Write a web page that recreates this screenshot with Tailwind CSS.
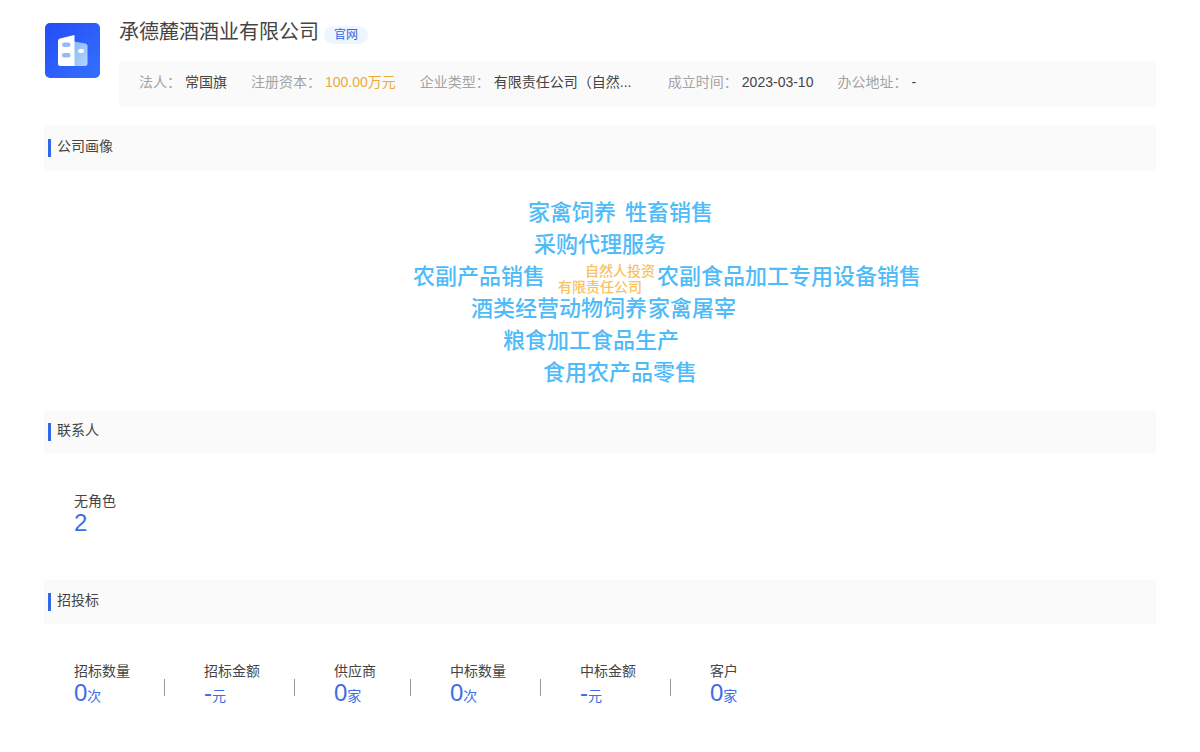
<!DOCTYPE html>
<html lang="zh-CN">
<head>
<meta charset="utf-8">
<meta name="viewport" content="width=device-width, initial-scale=1">
<title>承德麓酒酒业有限公司</title>
<script src="https://cdn.jsdelivr.net/npm/@tailwindcss/browser@4"></script>
</head>
<body class="bg-white px-11 font-['Liberation_Sans','Noto_Sans_CJK_SC',sans-serif] text-sm text-[#444]">
<header class="flex gap-[19px] pt-4">
  <svg class="mt-[7px] ml-px size-[55px] shrink-0" viewBox="0 0 55 55" aria-hidden="true">
    <defs>
      <linearGradient id="tile" x1="0" y1="0" x2="1" y2="1"><stop offset="0" stop-color="#234df8"/><stop offset="1" stop-color="#3570fd"/></linearGradient>
      <linearGradient id="wing" x1="0" y1="0" x2="1" y2="1"><stop offset="0" stop-color="#8bb8fb"/><stop offset="1" stop-color="#b2d5fe"/></linearGradient>
    </defs>
    <rect width="55" height="55" rx="5" fill="url(#tile)"/>
    <path d="M29 18.500 40.500 20.500Q42.500 21 42.500 23V40.500Q42.500 43 40 43H29Z" fill="url(#wing)"/>
    <path d="M15 15.500 29.500 12V43H15.500Q13 43 13 40.500V18Q13 16 15 15.500Z" fill="#fff"/>
    <rect x="17" y="19.500" width="8.500" height="4.500" rx="2.200" fill="#94b9f8"/>
    <rect x="17" y="30" width="8.500" height="4.500" rx="2.200" fill="#94b9f8"/>
    <rect x="33" y="26" width="6" height="4" rx="2" fill="#fff"/>
  </svg>
  <div class="min-w-0 flex-1">
    <div class="flex items-start gap-[5px]">
      <h1 class="text-xl leading-8">承德麓酒酒业有限公司</h1>
      <a href="#" class="mt-[10px] rounded-full bg-[#edf5fe] px-[10px] text-xs leading-[18px] text-[#2f66e8]">官网</a>
    </div>
    <dl class="mt-[14px] flex flex-wrap gap-x-6 bg-[#fafafa] px-5 pt-[10px] pb-[14px] leading-5">
      <div class="flex gap-1"><dt class="text-[#a3a3a3]">法人：</dt><dd>常国旗</dd></div>
      <div class="flex gap-1"><dt class="text-[#a3a3a3]">注册资本：</dt><dd class="text-[#eea93a]">100.00万元</dd></div>
      <div class="flex gap-1"><dt class="text-[#a3a3a3]">企业类型：</dt><dd class="w-[150px]">有限责任公司（自然...</dd></div>
      <div class="flex gap-1"><dt class="text-[#a3a3a3]">成立时间：</dt><dd>2023-03-10</dd></div>
      <div class="flex gap-1"><dt class="text-[#a3a3a3]">办公地址：</dt><dd>-</dd></div>
    </dl>
  </div>
</header>
<main>
  <section class="mt-5">
    <div class="flex h-11 items-start gap-[6px] bg-[#fafafa] pl-1">
      <span class="mt-[13px] h-[18px] w-[3px] bg-[#3069e8]"></span>
      <h2 class="pt-[10px] leading-5">公司画像</h2>
    </div>
    <div class="relative mx-auto h-60 w-[600px] text-[22px] leading-8 font-medium whitespace-nowrap text-[#4fbbf8]">
      <span class="absolute top-[27px] left-[228px]">家禽饲养</span>
      <span class="absolute top-[27px] left-[325px]">牲畜销售</span>
      <span class="absolute top-[59px] left-[234px]">采购代理服务</span>
      <span class="absolute top-[91px] left-[113px]">农副产品销售</span>
      <span class="absolute top-[91px] left-[357px]">农副食品加工专用设备销售</span>
      <span class="absolute top-[123px] left-[171px]">酒类经营</span>
      <span class="absolute top-[123px] left-[259px]">动物饲养</span>
      <span class="absolute top-[123px] left-[348px]">家禽屠宰</span>
      <span class="absolute top-[155px] left-[203px]">粮食加工食品生产</span>
      <span class="absolute top-[187px] left-[243px]">食用农产品零售</span>
      <span class="absolute top-[91px] left-[285px] text-sm leading-5 text-[#f8c260]">自然人投资</span>
      <span class="absolute top-[107px] left-[258px] text-sm leading-5 text-[#f8c260]">有限责任公司</span>
    </div>
  </section>
  <section>
    <div class="flex h-11 items-start gap-[6px] bg-[#fafafa] pl-1">
      <span class="mt-[13px] h-[18px] w-[3px] bg-[#3069e8]"></span>
      <h2 class="pt-[10px] leading-5">联系人</h2>
    </div>
    <dl class="px-[30px] pt-[37px] pb-[46px]">
      <dt class="leading-5">无角色</dt>
      <dd class="text-2xl leading-[23px] text-[#3b6ee6]">2</dd>
    </dl>
  </section>
  <section>
    <div class="flex h-11 items-start gap-[6px] bg-[#fafafa] pl-1">
      <span class="mt-[13px] h-[18px] w-[3px] bg-[#3069e8]"></span>
      <h2 class="pt-[10px] leading-5">招投标</h2>
    </div>
    <div class="flex px-[30px] pt-[37px]">
      <dl><dt class="leading-5">招标数量</dt><dd class="leading-[23px] text-[#3b6ee6]"><span class="text-2xl leading-[23px]">0</span>次</dd></dl>
      <span class="mt-[18px] mr-[39px] ml-[34px] h-[17px] w-px bg-[#999]"></span>
      <dl><dt class="leading-5">招标金额</dt><dd class="leading-[23px] text-[#3b6ee6]"><span class="text-2xl leading-[23px]">-</span>元</dd></dl>
      <span class="mt-[18px] mr-[39px] ml-[34px] h-[17px] w-px bg-[#999]"></span>
      <dl><dt class="leading-5">供应商</dt><dd class="leading-[23px] text-[#3b6ee6]"><span class="text-2xl leading-[23px]">0</span>家</dd></dl>
      <span class="mt-[18px] mr-[39px] ml-[34px] h-[17px] w-px bg-[#999]"></span>
      <dl><dt class="leading-5">中标数量</dt><dd class="leading-[23px] text-[#3b6ee6]"><span class="text-2xl leading-[23px]">0</span>次</dd></dl>
      <span class="mt-[18px] mr-[39px] ml-[34px] h-[17px] w-px bg-[#999]"></span>
      <dl><dt class="leading-5">中标金额</dt><dd class="leading-[23px] text-[#3b6ee6]"><span class="text-2xl leading-[23px]">-</span>元</dd></dl>
      <span class="mt-[18px] mr-[39px] ml-[34px] h-[17px] w-px bg-[#999]"></span>
      <dl><dt class="leading-5">客户</dt><dd class="leading-[23px] text-[#3b6ee6]"><span class="text-2xl leading-[23px]">0</span>家</dd></dl>
    </div>
  </section>
</main>
</body>
</html>
